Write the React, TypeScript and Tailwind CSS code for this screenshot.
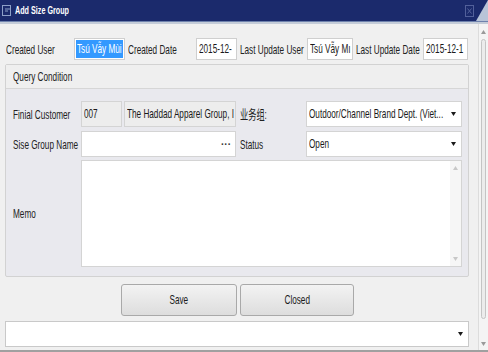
const font = "font-['Liberation_Sans','Noto_Sans_CJK_SC',sans-serif]";

function T({ children, center }: { children: React.ReactNode; center?: boolean }) {
  return (
    <span
      className={`inline-block whitespace-nowrap scale-x-[0.63] ${center ? "origin-center" : "origin-left"}`}
    >
      {children}
    </span>
  );
}

function Caret() {
  return (
    <svg width="5" height="4" viewBox="0 0 5 4" className="shrink-0">
      <path d="M0 0 H5 L2.5 4 Z" fill="#1a1a1a" />
    </svg>
  );
}

function Arrow({ up, color = "#9a9a9a" }: { up?: boolean; color?: string }) {
  return (
    <svg width="5" height="4" viewBox="0 0 5 4">
      <path d={up ? "M0 4 H5 L2.5 0 Z" : "M0 0 H5 L2.5 4 Z"} fill={color} />
    </svg>
  );
}

function Label({ text, w }: { text: string; w: string }) {
  return (
    <div className={`${w} shrink-0 text-[13px] leading-none text-[#222]`}>
      <T>{text}</T>
    </div>
  );
}

const box = "flex items-center overflow-hidden border text-[13px] text-[#1a1a1a]";

export default function App() {
  return (
    <div className={`${font} flex h-[352px] w-[488px] flex-col overflow-hidden bg-[#f0f0f0]`}>
      {/* title bar */}
      <div className="relative flex h-[21px] items-center gap-[3px] bg-[#1b2a6c] pl-[2px]">
        <svg width="10" height="12" viewBox="0 0 10 12">
          <rect x="0.5" y="0.5" width="8" height="10" fill="none" stroke="#8ea0c8" />
          <path d="M3 4 H8 M3 6 H6" stroke="#8ea0c8" />
        </svg>
        <span className="inline-block origin-left scale-x-[0.72] whitespace-nowrap text-[10px] font-bold text-white">
          Add Size Group
        </span>
        <svg width="9" height="12" viewBox="0 0 9 12" className="ml-auto mr-[14px]">
          <rect x="0.5" y="0.5" width="8" height="11" fill="none" stroke="#52609a" />
          <path d="M2.5 3.5 L6.5 8.5 M6.5 3.5 L2.5 8.5" stroke="#52609a" />
        </svg>
        <svg width="12" height="21" viewBox="0 0 12 21" className="absolute right-0 top-0">
          <path d="M12 0 V21 H0 Z" fill="#b8c4d8" />
        </svg>
      </div>
      <div className="h-[1px] bg-[#6f82ad]" />
      <div className="h-[2px] bg-[#c4ccd8]" />

      <div className="flex flex-1">
        {/* main */}
        <div className="flex w-[478px] flex-col pl-[5px]">
          {/* top row */}
          <div className="mt-[14px] flex h-[22px] items-center">
            <Label text="Created User" w="w-[69px] pl-[1px]" />
            <div className="flex h-[22px] w-[51px] items-center border border-[#cfcfcf] bg-white p-[1px]">
              <div className="flex h-full w-full items-center overflow-hidden bg-[#3399ff] pl-[1px] text-[13px] text-white">
                <T>Tsú Vẫy Mùi</T>
              </div>
            </div>
            <Label text="Created Date" w="w-[71px] pl-[3px]" />
            <div className={`${box} h-[22px] w-[41px] border-[#cfcfcf] bg-white pl-[2px]`}>
              <T>2015-12-</T>
            </div>
            <Label text="Last Update User" w="w-[70px] pl-[3px]" />
            <div className={`${box} h-[22px] w-[46px] border-[#cfcfcf] bg-white pl-[2px]`}>
              <T>Tsú Vẫy Mı</T>
            </div>
            <Label text="Last Update Date" w="w-[70px] pl-[3px]" />
            <div className={`${box} h-[22px] w-[45px] border-[#cfcfcf] bg-white pl-[2px]`}>
              <T>2015-12-1</T>
            </div>
          </div>

          {/* group box */}
          <div className="mt-[4px] flex w-[464px] flex-col rounded-[2px] border border-[#d2d2d2] bg-[#e9e9ee]">
            <div className="flex h-[24px] items-center border-b border-[#d6d6d6] bg-[#efefef] pl-[7px] text-[13px] text-[#222]">
              <T>Query Condition</T>
            </div>
            <div className="flex flex-col gap-[4px] pb-[9px] pl-[7px] pt-[12px]">
              <div className="flex h-[26px] items-center">
                <Label text="Finial Customer" w="w-[68px]" />
                <div className={`${box} h-[26px] w-[41px] border-[#d4d4d4] bg-[#ededed] pl-[2px]`}>
                  <T>007</T>
                </div>
                <div className={`${box} ml-[2px] h-[26px] w-[112px] border-[#d4d4d4] bg-[#ededed] pl-[2px]`}>
                  <T>The Haddad Apparel Group, I</T>
                </div>
                <Label text="业务组:" w="w-[70px] pl-[4px]" />
                <div className={`${box} h-[26px] w-[156px] justify-between border-[#d4d4d4] bg-white pl-[2px] pr-[5px]`}>
                  <div className="w-[140px] overflow-hidden">
                    <T>Outdoor/Channel Brand Dept. (Viet...</T>
                  </div>
                  <Caret />
                </div>
              </div>
              <div className="flex h-[26px] items-center">
                <Label text="Sise Group Name" w="w-[68px]" />
                <div className="flex h-[26px] w-[155px] items-center justify-end border border-[#d4d4d4] bg-white pr-[4px] text-[10px] font-bold text-[#333]">
                  ···
                </div>
                <Label text="Status" w="w-[70px] pl-[4px]" />
                <div className={`${box} h-[26px] w-[156px] justify-between border-[#d4d4d4] bg-white pl-[2px] pr-[5px]`}>
                  <T>Open</T>
                  <Caret />
                </div>
              </div>
              <div className="-mt-[1px] flex h-[107px] items-center">
                <Label text="Memo" w="w-[68px]" />
                <div className="flex h-[107px] w-[381px] justify-end border border-[#d4d4d4] bg-white">
                  <div className="flex w-[11px] flex-col items-center justify-between bg-[#f6f6f6] py-[5px]">
                    <Arrow up color="#c8c8c8" />
                    <Arrow color="#c8c8c8" />
                  </div>
                </div>
              </div>
            </div>
          </div>

          {/* buttons */}
          <div className="mt-[7px] flex h-[32px] gap-[3px] pl-[116px]">
            <button className="h-[32px] w-[116px] rounded-[3px] border border-[#a9a9a9] bg-gradient-to-b from-[#f3f3f3] to-[#dddddd] text-[13px] text-[#1a1a1a]">
              <T center>Save</T>
            </button>
            <button className="h-[32px] w-[114px] rounded-[3px] border border-[#a9a9a9] bg-gradient-to-b from-[#f3f3f3] to-[#dddddd] text-[13px] text-[#1a1a1a]">
              <T center>Closed</T>
            </button>
          </div>

          {/* bottom combo */}
          <div className="mt-[5px] flex h-[26px] w-[464px] items-center justify-end border border-[#c9c9c9] bg-white pr-[5px]">
            <Caret />
          </div>
        </div>

        {/* window scrollbar */}
        <div className="flex w-[10px] flex-col items-center border-l border-[#dcdcdc] bg-[#f4f4f4] pb-[4px] pt-[6px]">
          <Arrow up />
          <div className="mt-[5px] h-[280px] w-[5px] rounded-full border border-[#c4c4c4] bg-[#ececec]" />
          <div className="mt-auto">
            <Arrow />
          </div>
        </div>
      </div>
      <div className="h-[2px] bg-[#a0a0a0]" />
    </div>
  );
}
